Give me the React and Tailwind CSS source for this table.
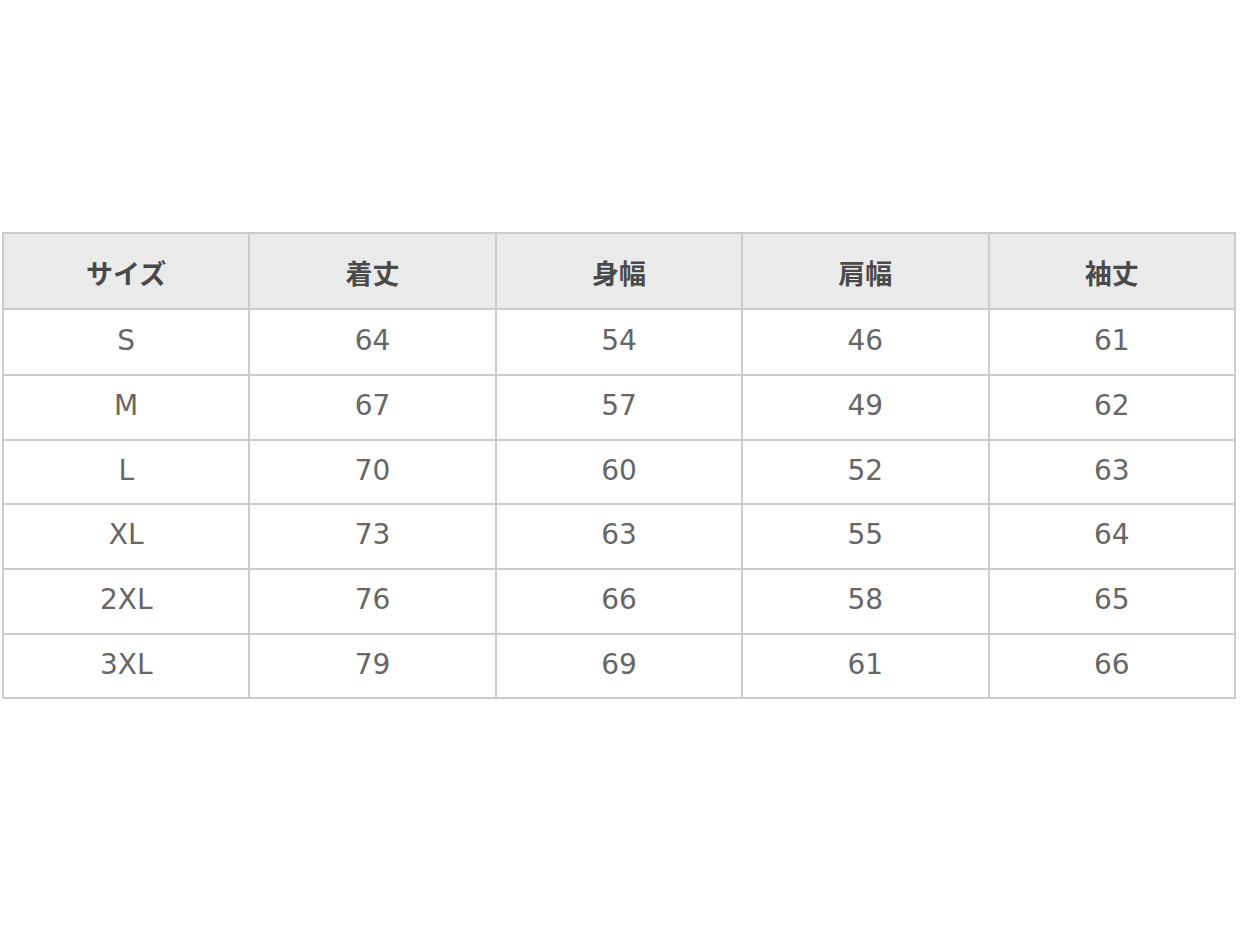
import React from "react";

const headers = ["サイズ", "着丈", "身幅", "肩幅", "袖丈"];
const rows = [
  { h: "h-[66px]", c: ["S", "64", "54", "46", "61"] },
  { h: "h-[65px]", c: ["M", "67", "57", "49", "62"] },
  { h: "h-[64px]", c: ["L", "70", "60", "52", "63"] },
  { h: "h-[65px]", c: ["XL", "73", "63", "55", "64"] },
  { h: "h-[65px]", c: ["2XL", "76", "66", "58", "65"] },
  { h: "h-[64px]", c: ["3XL", "79", "69", "61", "66"] },
];

export default function App() {
  return (
    <div className="w-[1240px] h-[932px] bg-white pt-[232px] pl-[2px]">
      <table className="w-[1234px] border-collapse table-fixed">
        <thead>
          <tr className="h-[76px] bg-[#ebebeb]">
            {headers.map((h) => (
              <th
                key={h}
                className="border-2 border-[#cccccc] text-center text-[27px] leading-none font-bold text-[#4a4a4a] pt-[2px]"
                style={{ fontFamily: '"Noto Sans CJK JP", sans-serif' }}
              >
                {h}
              </th>
            ))}
          </tr>
        </thead>
        <tbody>
          {rows.map((r) => (
            <tr key={r.c[0]} className={r.h}>
              {r.c.map((c, i) => (
                <td
                  key={i}
                  className="border-2 border-[#cccccc] text-center text-[28px] leading-none font-normal text-[#666666] pb-[3px]"
                  style={{ fontFamily: '"DejaVu Sans", "Noto Sans CJK JP", sans-serif' }}
                >
                  {c}
                </td>
              ))}
            </tr>
          ))}
        </tbody>
      </table>
    </div>
  );
}
